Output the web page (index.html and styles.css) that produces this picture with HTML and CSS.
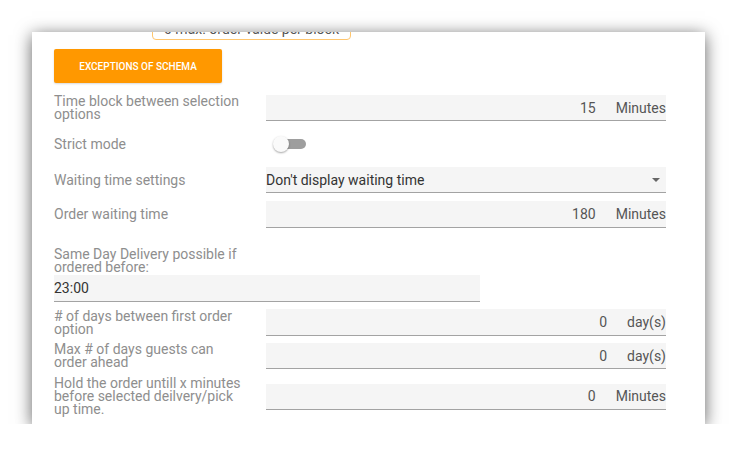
FILE: index.html
```html
<!DOCTYPE html>
<html>
<head>
<meta charset="utf-8">
<link rel="stylesheet" href="styles.css">
</head>
<body>
<div class="card">
  <div class="content">
    <div class="badge">0 max. order value per block</div>
    <button class="btn">EXCEPTIONS OF SCHEMA</button>

    <div class="row r1">
      <div class="label">Time block between selection options</div>
      <div class="field"><span class="value">15</span><span class="suffix">Minutes</span></div>
    </div>

    <div class="row r2">
      <div class="label">Strict mode</div>
      <div class="toggle"><span class="track"></span><span class="knob"></span></div>
    </div>

    <div class="row r3">
      <div class="label">Waiting time settings</div>
      <div class="field select"><span class="sel-text">Don't display waiting time</span><span class="caret"></span></div>
    </div>

    <div class="row r4">
      <div class="label">Order waiting time</div>
      <div class="field"><span class="value">180</span><span class="suffix">Minutes</span></div>
    </div>

    <div class="stack r5">
      <div class="label wide">Same Day Delivery possible if ordered before:</div>
      <div class="field time"><span class="sel-text">23:00</span></div>
    </div>

    <div class="row r6">
      <div class="label"># of days between first order option</div>
      <div class="field"><span class="value">0</span><span class="suffix">day(s)</span></div>
    </div>

    <div class="row r7">
      <div class="label">Max # of days guests can order ahead</div>
      <div class="field"><span class="value">0</span><span class="suffix">day(s)</span></div>
    </div>

    <div class="row r8">
      <div class="label">Hold the order untill x minutes before selected deilvery/pick up time.</div>
      <div class="field"><span class="value">0</span><span class="suffix">Minutes</span></div>
    </div>
  </div>
</div>
</body>
</html>
```
FILE: styles.css
```css
html, body {
  margin: 0;
  padding: 0;
  background: #ffffff;
  font-family: Roboto, "Liberation Sans", sans-serif;
}

.card {
  margin: 32px 0 0 32px;
  width: 673px;
  height: 392px;
  background: #ffffff;
  box-shadow: 0 3px 16px rgba(0, 0, 0, 0.62);
  overflow: hidden;
}

.content {
  padding: 0 39px 0 22px;
}

.badge {
  margin: -13px 0 0 98px;
  width: 199px;
  box-sizing: border-box;
  border: 1px solid #ffc66e;
  border-radius: 4px;
  font-size: 14px;
  line-height: 19px;
  color: #555555;
  text-align: center;
}

.btn {
  display: block;
  margin-top: 9px;
  width: 168px;
  height: 34px;
  border: none;
  border-radius: 2px;
  background: #ff9800;
  color: #ffffff;
  font-family: Roboto, "Liberation Sans", sans-serif;
  font-size: 10px;
  font-weight: 500;
  padding: 0;
  box-shadow: 0 1px 2px rgba(0, 0, 0, 0.15);
}

.row {
  display: flex;
  align-items: center;
}

.label {
  width: 212px;
  flex: none;
  box-sizing: border-box;
  padding-right: 24px;
  font-size: 14px;
  line-height: 13px;
  color: #8e8e8e;
}

.label.wide {
  width: 212px;
}

.field {
  flex: 1;
  height: 26px;
  box-sizing: border-box;
  background: #f5f5f5;
  border-bottom: 1px solid #a3a3a3;
  display: flex;
  align-items: center;
  font-size: 14px;
  color: #555555;
}

.value {
  flex: 1;
  text-align: right;
}

.suffix {
  margin-left: 20px;
}

.select {
  color: #333333;
}

.sel-text {
  flex: 1;
}

.caret {
  width: 0;
  height: 0;
  border-left: 4px solid transparent;
  border-right: 4px solid transparent;
  border-top: 4px solid #666666;
  margin-right: 6px;
}

.toggle {
  position: relative;
  margin-left: 7px;
  width: 33px;
  height: 26px;
}

.track {
  position: absolute;
  left: 3px;
  top: 8px;
  width: 30px;
  height: 10px;
  border-radius: 5px;
  background: #9e9e9e;
}

.knob {
  position: absolute;
  left: 0;
  top: 5px;
  width: 16px;
  height: 16px;
  border-radius: 50%;
  background: #fafafa;
  box-shadow: 0 1px 2px rgba(0, 0, 0, 0.35);
}

.stack .field.time {
  width: 426px;
  flex: none;
  height: 27px;
  margin-top: 1px;
  color: #333333;
}

.r1 { margin-top: 12px; }
.r2 { margin-top: 10px; }
.r3 { margin-top: 10px; }
.r4 { margin-top: 8px; }
.r4 .field { height: 27px; }
.r5 { margin-top: 20px; }
.r6 { margin-top: 7px; }
.r6 .field { height: 27px; }
.r7 { margin-top: 7px; }
.r8 { margin-top: 8px; }
```
